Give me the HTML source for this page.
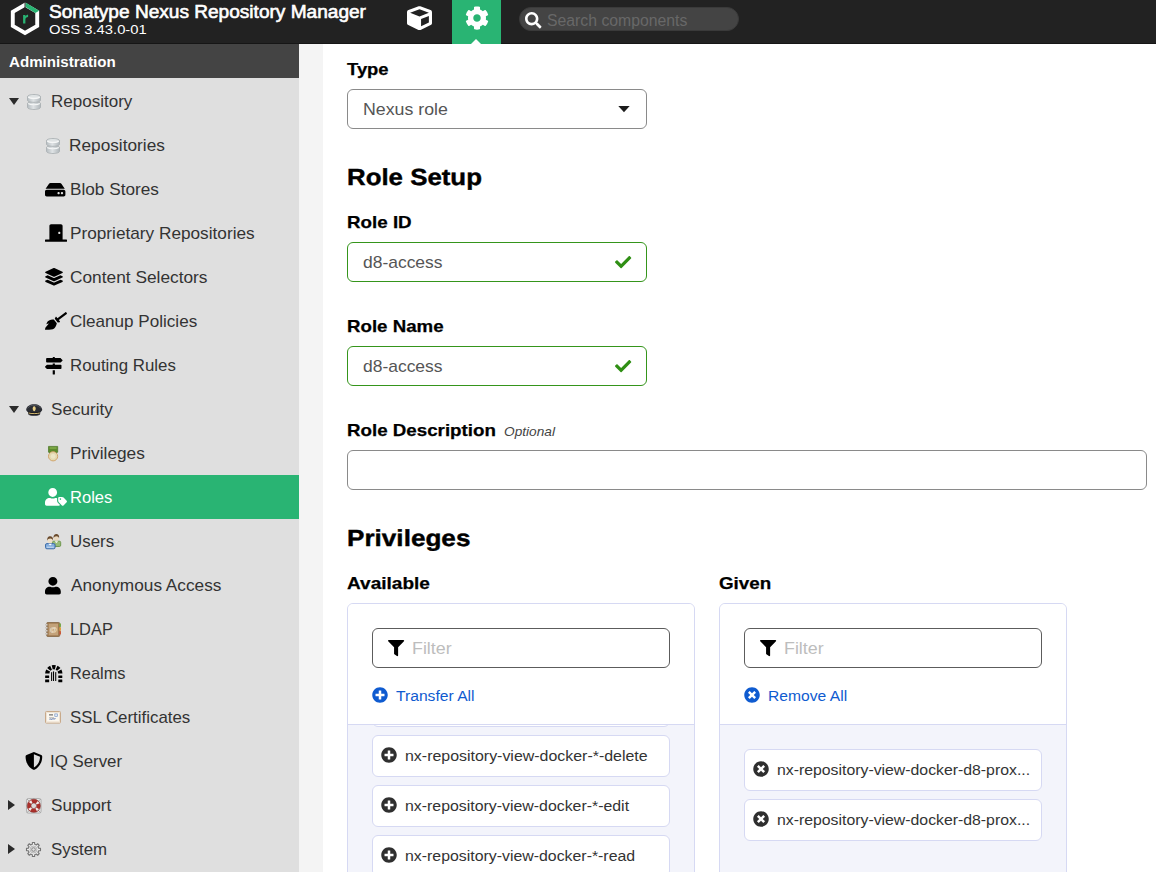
<!DOCTYPE html>
<html><head><meta charset="utf-8"><title>Nexus Repository Manager</title>
<style>
html,body{margin:0;padding:0;width:1156px;height:872px;overflow:hidden;background:#fff}
#app{position:absolute;left:0;top:0;width:1156px;height:872px;overflow:hidden;background:#fff;font-family:"Liberation Sans",sans-serif}
.t{position:absolute;white-space:nowrap;transform-origin:0 50%}
.abs{position:absolute}
.box{position:absolute;box-sizing:border-box;border-radius:6px;background:#fff}
svg{display:block;overflow:visible}
</style></head><body><div id="app">

<div class="abs" style="left:0;top:0;width:1156px;height:44px;background:#222"></div>
<div class="abs" style="left:0;top:43px;width:1156px;height:1px;background:#161616"></div>
<svg style="position:absolute;left:0px;top:0px;" width="48" height="44" viewBox="0 0 48 44"><polygon points="25.00,4.80 37.21,11.85 37.21,25.95 25.00,33.00 12.79,25.95 12.79,11.85" fill="none" stroke="#fff" stroke-width="3.9" stroke-linejoin="miter"/><polygon points="25.50,2.60 39.11,10.75 35.31,12.95 25.50,7.00" fill="#29b473"/><rect x="24.55" y="1.799999999999999" width="0.95" height="6.2" fill="#222"/><path fill="#29b473" d="M23.100 14.900h2.300v1.300c.6-.9 1.400-1.500 2.700-1.500v2.300c-1.600 0-2.700.8-2.700 2.600v4h-2.300z"/></svg>
<div class="t" style="left:48.81px;top:1px;font-size:18px;line-height:22px;font-weight:400;color:#fff;transform:scaleX(1.0595);-webkit-text-stroke:.6px #fff;">Sonatype Nexus Repository Manager</div>
<div class="t" style="left:48.91px;top:22px;font-size:12.5px;line-height:16px;font-weight:400;color:#fff;transform:scaleX(1.1816);">OSS 3.43.0-01</div>
<svg preserveAspectRatio="none" style="position:absolute;left:407px;top:5.8px;" width="25" height="24.4" viewBox="0 0 512 512"><path fill="#fff" d="M239.1 6.3l-208 78c-18.7 7-31.1 25-31.1 45v225.1c0 18.2 10.3 34.8 26.5 42.900l208 104c13.500 6.800 29.400 6.800 42.900 0l208-104c16.300-8.100 26.500-24.800 26.500-42.900V129.300c0-20-12.400-37.900-31.100-44.900l-208-78C262 2.200 250 2.200 239.100 6.300zM256 68.400l192 72v1.100l-192 78-192-78v-1.100l192-72zm32 356V275.500l160-65v133.900l-160 80z"/></svg>
<div class="abs" style="left:452px;top:0;width:49px;height:44px;background:#29b473"></div>
<svg style="position:absolute;left:464.5px;top:6px;" width="24" height="24" viewBox="0 0 512 512"><path fill="#fff" d="M487.4 315.7l-42.600-24.600c4.300-23.200 4.300-47 0-70.200l42.600-24.600c4.900-2.800 7.100-8.600 5.500-14-11.100-35.600-30-67.800-54.700-94.600-3.800-4.100-10-5.100-14.800-2.300L380.800 110c-17.900-15.400-38.500-27.300-60.800-35.100V25.800c0-5.600-3.900-10.500-9.400-11.700-36.700-8.200-74.300-7.800-109.200 0-5.500 1.200-9.400 6.100-9.400 11.700V75c-22.200 7.900-42.800 19.800-60.800 35.100L88.700 85.500c-4.900-2.800-11-1.900-14.800 2.300-24.700 26.700-43.600 58.900-54.700 94.600-1.700 5.400.6 11.200 5.500 14L67.300 221c-4.300 23.200-4.300 47 0 70.200l-42.600 24.600c-4.900 2.800-7.100 8.600-5.500 14 11.100 35.600 30 67.800 54.700 94.600 3.800 4.100 10 5.100 14.800 2.300l42.600-24.600c17.900 15.400 38.500 27.300 60.800 35.100v49.200c0 5.600 3.900 10.500 9.400 11.700 36.700 8.200 74.300 7.800 109.200 0 5.500-1.200 9.400-6.100 9.400-11.700v-49.200c22.200-7.900 42.800-19.800 60.800-35.100l42.600 24.600c4.900 2.800 11 1.900 14.800-2.300 24.700-26.700 43.600-58.900 54.700-94.600 1.500-5.500-.7-11.300-5.600-14.100zM256 336c-44.100 0-80-35.900-80-80s35.900-80 80-80 80 35.900 80 80-35.900 80-80 80z"/></svg>
<svg style="position:absolute;left:470px;top:38px;" width="12" height="6" viewBox="0 0 12 6"><path d="M1 6L6 0.900L11 6z" fill="#fff"/></svg>
<div class="abs" style="left:519px;top:7px;width:220px;height:24px;border-radius:12px;background:#444;box-sizing:border-box;border:1px solid #3a3a3a"></div>
<svg style="position:absolute;left:525px;top:12px;" width="16.5" height="16.5" viewBox="0 0 512 512"><path fill="#fff" d="M505 442.700L405.300 343c-4.500-4.500-10.600-7-17-7H372c27.600-35.300 44-79.700 44-128C416 93.100 322.900 0 208 0S0 93.100 0 208s93.100 208 208 208c48.300 0 92.700-16.400 128-44v16.300c0 6.400 2.500 12.500 7 17l99.700 99.700c9.400 9.400 24.600 9.400 33.900 0l28.300-28.300c9.400-9.400 9.400-24.600.1-34zM208 336c-70.700 0-128-57.200-128-128 0-70.700 57.200-128 128-128 70.700 0 128 57.200 128 128 0 70.700-57.200 128-128 128z"/></svg>
<div class="t" style="left:546.66px;top:11px;font-size:16px;line-height:19px;font-weight:400;color:#686868;transform:scaleX(0.9865);">Search components</div>
<div class="abs" style="left:0;top:44px;width:299px;height:828px;background:#dfdfdf"></div>
<div class="abs" style="left:0;top:44px;width:299px;height:34px;background:#444"></div>
<div class="t" style="left:9.20px;top:52px;font-size:15px;line-height:19px;font-weight:700;color:#fff;transform:scaleX(1.0077);">Administration</div>
<div class="abs" style="left:299px;top:44px;width:24px;height:828px;background:#f4f4f4"></div>
<svg style="position:absolute;left:9px;top:98.0px;" width="10" height="7" viewBox="0 0 10 7"><path d="M0 0h10L5 7z" fill="#2b2b2b"/></svg>
<div class="t" style="left:51.00px;top:79px;font-size:17px;line-height:45px;font-weight:400;color:#333;transform:scaleX(1.0006);">Repository</div>
<div class="t" style="left:69.18px;top:123px;font-size:17px;line-height:45px;font-weight:400;color:#333;transform:scaleX(1.0146);">Repositories</div>
<div class="t" style="left:69.58px;top:167px;font-size:17px;line-height:45px;font-weight:400;color:#333;transform:scaleX(1.0122);">Blob Stores</div>
<div class="t" style="left:69.58px;top:211px;font-size:17px;line-height:45px;font-weight:400;color:#333;transform:scaleX(1.0125);">Proprietary Repositories</div>
<div class="t" style="left:70.14px;top:255px;font-size:17px;line-height:45px;font-weight:400;color:#333;transform:scaleX(1.0176);">Content Selectors</div>
<div class="t" style="left:70.15px;top:299px;font-size:17px;line-height:45px;font-weight:400;color:#333;transform:scaleX(1.0044);">Cleanup Policies</div>
<div class="t" style="left:69.61px;top:343px;font-size:17px;line-height:45px;font-weight:400;color:#333;transform:scaleX(0.9909);">Routing Rules</div>
<svg style="position:absolute;left:9px;top:406.0px;" width="10" height="7" viewBox="0 0 10 7"><path d="M0 0h10L5 7z" fill="#2b2b2b"/></svg>
<div class="t" style="left:50.75px;top:387px;font-size:17px;line-height:45px;font-weight:400;color:#333;transform:scaleX(1.0050);">Security</div>
<div class="t" style="left:69.58px;top:431px;font-size:17px;line-height:45px;font-weight:400;color:#333;transform:scaleX(1.0154);">Privileges</div>
<div class="abs" style="left:0;top:475px;width:299px;height:44px;background:#29b473"></div>
<div class="t" style="left:69.64px;top:475px;font-size:17px;line-height:45px;font-weight:400;color:#fff;transform:scaleX(0.9745);">Roles</div>
<div class="t" style="left:69.76px;top:519px;font-size:17px;line-height:45px;font-weight:400;color:#333;transform:scaleX(0.9929);">Users</div>
<div class="t" style="left:70.70px;top:563px;font-size:17px;line-height:45px;font-weight:400;color:#333;transform:scaleX(1.0139);">Anonymous Access</div>
<div class="t" style="left:69.55px;top:607px;font-size:17px;line-height:45px;font-weight:400;color:#333;transform:scaleX(0.9643);">LDAP</div>
<div class="t" style="left:69.55px;top:651px;font-size:17px;line-height:45px;font-weight:400;color:#333;transform:scaleX(0.9640);">Realms</div>
<div class="t" style="left:70.16px;top:695px;font-size:17px;line-height:45px;font-weight:400;color:#333;transform:scaleX(0.9921);">SSL Certificates</div>
<div class="t" style="left:49.81px;top:739px;font-size:17px;line-height:45px;font-weight:400;color:#333;transform:scaleX(0.9901);">IQ Server</div>
<svg style="position:absolute;left:8px;top:800px;" width="7" height="10" viewBox="0 0 7 10"><path d="M0 0v10L7 5z" fill="#2b2b2b"/></svg>
<div class="t" style="left:50.84px;top:783px;font-size:17px;line-height:45px;font-weight:400;color:#333;transform:scaleX(1.0128);">Support</div>
<svg style="position:absolute;left:8px;top:844px;" width="7" height="10" viewBox="0 0 7 10"><path d="M0 0v10L7 5z" fill="#2b2b2b"/></svg>
<div class="t" style="left:50.86px;top:827px;font-size:17px;line-height:45px;font-weight:400;color:#333;transform:scaleX(0.9900);">System</div>
<svg style="position:absolute;left:27px;top:94px;" width="14" height="16" viewBox="0 0 14 16"><defs><linearGradient id="dbg2794" x1="0" x2="1"><stop offset="0" stop-color="#b6bdc1"/><stop offset=".45" stop-color="#dfe3e5"/><stop offset="1" stop-color="#b0b7bb"/></linearGradient></defs><path d="M.5 9.400c0-1 2.900-1.700 6.500-1.700s6.500.7 6.500 1.700v3.900c0 1.300-2.900 2.200-6.500 2.200S.5 14.600.5 13.300z" fill="url(#dbg2794)" stroke="#a7adb0" stroke-width=".8"/><path d="M1.200 9.500c1 .9 3.100 1.300 5.800 1.300s4.800-.4 5.800-1.300" fill="none" stroke="#f4f6f6" stroke-width="1.100"/><path d="M.5 2.600C.5 1.400 3.400.5 7 .5s6.500.9 6.500 2.100v3.700c0 1.200-2.900 2-6.500 2S.5 7.500.5 6.300z" fill="url(#dbg2794)" stroke="#a7adb0" stroke-width=".8"/><ellipse cx="7" cy="2.700" rx="5.700" ry="1.700" fill="#dfe3e4"/><path d="M1.200 3c1 1 3.100 1.400 5.800 1.400s4.800-.4 5.800-1.400" fill="none" stroke="#f6f7f7" stroke-width="1.100"/></svg>
<svg style="position:absolute;left:46px;top:138px;" width="14" height="16" viewBox="0 0 14 16"><defs><linearGradient id="dbg46138" x1="0" x2="1"><stop offset="0" stop-color="#b6bdc1"/><stop offset=".45" stop-color="#dfe3e5"/><stop offset="1" stop-color="#b0b7bb"/></linearGradient></defs><path d="M.5 9.400c0-1 2.900-1.700 6.500-1.700s6.500.7 6.500 1.700v3.900c0 1.300-2.900 2.200-6.500 2.200S.5 14.600.5 13.300z" fill="url(#dbg46138)" stroke="#a7adb0" stroke-width=".8"/><path d="M1.200 9.500c1 .9 3.100 1.300 5.800 1.300s4.800-.4 5.800-1.300" fill="none" stroke="#f4f6f6" stroke-width="1.100"/><path d="M.5 2.600C.5 1.400 3.400.5 7 .5s6.500.9 6.500 2.100v3.700c0 1.200-2.900 2-6.500 2S.5 7.500.5 6.300z" fill="url(#dbg46138)" stroke="#a7adb0" stroke-width=".8"/><ellipse cx="7" cy="2.700" rx="5.700" ry="1.700" fill="#dfe3e4"/><path d="M1.200 3c1 1 3.100 1.400 5.800 1.400s4.800-.4 5.800-1.400" fill="none" stroke="#f6f7f7" stroke-width="1.100"/></svg>
<svg style="position:absolute;left:45px;top:182.7px;" width="20.4" height="13.5" viewBox="0 64 576 384" preserveAspectRatio="none"><path fill="#000" d="M576 304v96c0 26.510-21.490 48-48 48H48c-26.510 0-48-21.490-48-48v-96c0-26.510 21.490-48 48-48h480c26.510 0 48 21.490 48 48zm-48-80a79.557 79.557 0 0 1 30.777 6.165L462.250 85.374A48.003 48.003 0 0 0 422.311 64H153.689a48 48 0 0 0-39.938 21.374L17.223 230.165A79.557 79.557 0 0 1 48 224h480zm-48 96c-17.673 0-32 14.327-32 32s14.327 32 32 32 32-14.327 32-32-14.327-32-32-32zm-96 0c-17.673 0-32 14.327-32 32s14.327 32 32 32 32-14.327 32-32-14.327-32-32-32z"/></svg>
<svg style="position:absolute;left:45px;top:224.3px;" width="22" height="17.9" viewBox="0 0 640 512"><path fill="#000" d="M624 448H512V50.800C512 22.780 490.470 0 464 0H175.990c-26.470 0-48 22.780-48 50.800V448H16c-8.840 0-16 7.160-16 16v32c0 8.840 7.160 16 16 16h608c8.840 0 16-7.160 16-16v-32c0-8.840-7.160-16-16-16zM415.990 288c-17.670 0-32-14.330-32-32s14.330-32 32-32 32 14.330 32 32c.010 17.670-14.320 32-32 32z"/></svg>
<svg style="position:absolute;left:45px;top:268.4px;" width="18" height="17.7" viewBox="0 0 512 512"><path fill="#000" d="M12.410 148.020l232.940 105.670c6.800 3.090 14.490 3.090 21.290 0l232.940-105.670c16.550-7.510 16.550-32.520 0-40.030L266.650 2.310a25.607 25.607 0 0 0-21.290 0L12.410 107.980c-16.550 7.510-16.550 32.530 0 40.040zm487.180 88.280l-58.090-26.330-161.640 73.270c-7.560 3.430-15.590 5.170-23.860 5.170s-16.290-1.740-23.860-5.170L70.510 209.970l-58.100 26.330c-16.550 7.500-16.550 32.500 0 40l232.940 105.590c6.800 3.080 14.490 3.080 21.290 0L499.590 276.300c16.550-7.500 16.550-32.500 0-40zm0 127.800l-57.870-26.230-161.860 73.370c-7.560 3.430-15.590 5.170-23.860 5.170s-16.290-1.740-23.860-5.170L70.290 337.870 12.410 364.100c-16.550 7.500-16.550 32.500 0 40l232.940 105.590c6.800 3.080 14.490 3.080 21.290 0L499.590 404.100c16.550-7.500 16.550-32.500 0-40z"/></svg>
<svg style="position:absolute;left:45px;top:312.4px;" width="22" height="17.8" viewBox="0 0 640 512"><path fill="#000" d="M256.470 216.770l86.730 109.180s-16.600 102.360-76.570 150.120C206.660 523.850 0 510.190 0 510.190s3.800-23.140 11-55.430l94.620-112.170c3.970-4.700-.87-11.620-6.650-9.500l-60.400 22.090c14.440-41.660 32.720-80.040 54.600-97.470 59.970-47.760 163.300-40.940 163.300-40.940zM636.530 31.030l-19.860-25c-5.490-6.900-15.520-8.050-22.410-2.560l-232.480 177.800-34.140-42.970c-5.090-6.410-15.140-5.210-18.590 2.210l-25.330 54.550 86.730 109.180 58.800-12.450c8-1.690 11.420-11.200 6.340-17.600l-34.090-42.920 232.480-177.800c6.890-5.480 8.040-15.530 2.550-22.440z"/></svg>
<svg style="position:absolute;left:45px;top:356.6px;" width="17.6" height="17.6" viewBox="0 0 512 512"><path fill="#000" d="M507.310 84.690L464 41.370c-6-6-14.140-9.370-22.630-9.370H288V16c0-8.840-7.160-16-16-16h-32c-8.840 0-16 7.160-16 16v16H56c-13.250 0-24 10.750-24 24v80c0 13.250 10.750 24 24 24h385.370c8.490 0 16.620-3.370 22.630-9.370l43.310-43.310c6.250-6.260 6.250-16.390 0-22.630zM224 496c0 8.840 7.160 16 16 16h32c8.840 0 16-7.160 16-16V384h-64v112zm232-272H288v-32h-64v32H70.630c-8.490 0-16.620 3.370-22.630 9.370L4.690 276.690c-6.250 6.250-6.250 16.380 0 22.630L48 342.630c6 6 14.140 9.370 22.630 9.370H456c13.250 0 24-10.750 24-24v-80c0-13.250-10.750-24-24-24z"/></svg>
<svg style="position:absolute;left:45px;top:488.4px;" width="22" height="17.8" viewBox="0 0 640 512"><path fill="#fff" d="M630.600 364.900l-90.300-90.200c-12-12-28.300-18.700-45.300-18.700h-79.300c-17.700 0-32 14.300-32 32v79.200c0 17 6.700 33.200 18.700 45.200l90.300 90.200c12.500 12.500 32.800 12.500 45.300 0l92.500-92.500c12.600-12.500 12.600-32.700.1-45.200zm-182.800-21c-13.300 0-24-10.700-24-24s10.700-24 24-24 24 10.700 24 24c0 13.200-10.700 24-24 24zm-223.800-88c70.700 0 128-57.300 128-128C352 57.300 294.700 0 224 0S96 57.300 96 128c0 70.600 57.300 127.900 128 127.900zm127.800 111.200V294c-12.200-3.600-24.900-6.200-38.200-6.200h-16.700c-22.200 10.200-46.900 16-72.900 16s-50.600-5.800-72.900-16h-16.700C60.200 287.900 0 348.100 0 422.300v41.600c0 26.500 21.500 48 48 48h352c15.500 0 29.100-7.500 37.900-18.900l-58-58c-18.100-18.100-28.100-42.200-28.100-67.900z"/></svg>
<svg preserveAspectRatio="none" style="position:absolute;left:45.1px;top:576.7px;" width="15.8" height="17.4" viewBox="0 0 448 512"><path fill="#000" d="M224 256c70.700 0 128-57.300 128-128S294.700 0 224 0 96 57.300 96 128s57.300 128 128 128zm89.600 32h-16.700c-22.200 10.200-46.900 16-72.900 16s-50.600-5.800-72.900-16h-16.700C60.200 288 0 348.200 0 422.400V464c0 26.500 21.500 48 48 48h352c26.500 0 48-21.500 48-48v-41.600c0-74.200-60.200-134.400-134.400-134.400z"/></svg>
<svg style="position:absolute;left:25px;top:752.2px;" width="17.8" height="17.8" viewBox="0 0 512 512"><path fill="#000" d="M466.500 83.700l-192-80a48.150 48.150 0 0 0-36.900 0l-192 80C27.700 91.100 16 108.600 16 128c0 198.500 114.500 335.700 221.500 380.300 11.800 4.900 25.100 4.900 36.900 0C360.100 472.600 496 349.300 496 128c0-19.400-11.700-36.900-29.500-44.300zM256.100 446.300l-.1-381 175.900 73.300c-3.300 151.400-82.100 261.100-175.800 307.700z"/></svg>
<svg style="position:absolute;left:25.8px;top:403.6px;" width="16.4" height="12" viewBox="0 0 16.400 12"><path d="M.2 5.400C.8 2.300 4 .3 8.200.3s7.400 2 8 5.100c.2 1-1 2.200-2 2.900-1.500 1-10.500 1-12 0-1-.7-2.200-1.900-2-2.900z" fill="#2b2d33"/><path d="M1.600 4.300C2.800 2.200 5.200 1.200 8.200 1.200s5.400 1 6.600 3.100" fill="none" stroke="#5c6068" stroke-width=".8"/><path d="M2 7.600c2 1.100 10.400 1.100 12.400 0l-.3 2.700c-1.700 1.700-10.100 1.700-11.800 0z" fill="#15161a"/><path d="M2.600 9c2.400.8 8.800.8 11.200 0" stroke="#e6c877" stroke-width=".9" fill="none"/><path d="M2.700 10.500c2 1.300 9 1.300 11 0" stroke="#3c3e45" stroke-width=".8" fill="none"/><path d="M8.200 2.300c1 0 1.500 1 1.500 2.300s-.6 2.600-1.500 2.600-1.500-1.300-1.500-2.600.5-2.300 1.500-2.300z" fill="#e9cf86"/></svg>
<svg style="position:absolute;left:48px;top:446px;" width="10.2" height="15.5" viewBox="0 0 10.200 15.500"><path d="M.5.400h9.200v5.800L5.100 8 .5 6.200z" fill="#5d8a2c" stroke="#4a7622" stroke-width=".7"/><rect x="1.600" y="1.300" width="7" height="1.400" fill="#86b04e"/><circle cx="5.100" cy="10.300" r="4.600" fill="#e4dbb4" stroke="#d0a46a" stroke-width="1"/><circle cx="5.100" cy="10.300" r="2.900" fill="#ece6c6" stroke="#dcd0a0" stroke-width=".5"/></svg>
<svg style="position:absolute;left:45px;top:534px;" width="16.2" height="15.2" viewBox="0 0 16.200 15.200"><rect x="7.300" y="7.200" width="8.400" height="5.300" rx="1.300" fill="#97bb78" stroke="#5d8a3a" stroke-width=".8"/><path d="M9.600 7.300l1.800 1.700 1.800-1.700z" fill="#fff"/><ellipse cx="11.300" cy="3.700" rx="2.500" ry="3" fill="#ead9c0"/><path d="M8.600 4.200C8.100 1.300 9.800.1 11.400.1s3.200 1.200 2.700 4.100c-.3-1.300-1.200-2-2.700-2s-2.500.7-2.800 2z" fill="#6a4a2c"/><rect x=".5" y="9.600" width="9.600" height="5.200" rx="1.400" fill="#85aedd" stroke="#3465a4" stroke-width=".9"/><path d="M3.200 9.700l2 1.900 2-1.900z" fill="#fff"/><rect x="1.800" y="12.700" width="7" height="1.100" fill="#c5daf0"/><ellipse cx="5.100" cy="6.100" rx="2.600" ry="3.100" fill="#efe0c8"/><path d="M2.300 6.700C1.800 3.600 3.500 2.300 5.200 2.300s3.300 1.300 2.800 4.400c-.3-1.400-1.300-2.100-2.800-2.100S2.600 5.300 2.300 6.700z" fill="#6a4a2c"/></svg>
<svg style="position:absolute;left:45px;top:622px;" width="16.3" height="15" viewBox="0 0 16.300 15"><rect x="1.700" y=".5" width="13" height="14" rx="1" fill="#a07a50" stroke="#7a5a36" stroke-width=".7"/><rect x="3.700" y="1.700" width="9.300" height="11.600" fill="#c3a27a"/><rect x="14.300" y="1.500" width="1.700" height="3.400" fill="#79a84a"/><rect x="14.300" y="5.300" width="1.700" height="3.400" fill="#e0a040"/><rect x="14.300" y="9.100" width="1.700" height="3.400" fill="#c95a3a"/><g fill="#e9e4dc" stroke="#8a8278" stroke-width=".4"><circle cx="1.700" cy="2.800" r="1"/><circle cx="1.700" cy="5.800" r="1"/><circle cx="1.700" cy="8.800" r="1"/><circle cx="1.700" cy="11.800" r="1"/></g><text x="8.400" y="10.300" font-family="Liberation Sans" font-size="7.500" font-weight="700" fill="#f4ead8" text-anchor="middle">@</text></svg>
<svg style="position:absolute;left:44.9px;top:664.8px;" width="17.6" height="17.4" viewBox="0 0 17.600 17.400"><g fill="#000"><path d="M0.15 8.45A8.65 8.65 0 0 1 1.23 4.41L5.04 6.52A4.3 4.3 0 0 0 4.50 8.52z"/><path d="M2.17 3.04A8.65 8.65 0 0 1 5.14 0.76L6.98 4.70A4.3 4.3 0 0 0 5.51 5.84z"/><path d="M6.71 0.21A8.65 8.65 0 0 1 10.89 0.21L9.84 4.43A4.3 4.3 0 0 0 7.76 4.43z"/><path d="M12.46 0.76A8.65 8.65 0 0 1 15.43 3.04L12.09 5.84A4.3 4.3 0 0 0 10.62 4.70z"/><path d="M16.37 4.41A8.65 8.65 0 0 1 17.45 8.45L13.10 8.52A4.3 4.3 0 0 0 12.56 6.52z"/><rect x="0.15" y="10.400" width="4" height="2.600" rx=".3"/><rect x="0.15" y="14.500" width="4" height="2.700" rx=".3"/><rect x="13.3" y="10.400" width="4" height="2.600" rx=".3"/><rect x="13.3" y="14.500" width="4" height="2.700" rx=".3"/><rect x="6.1" y="7.0" width="1.050" height="9.100000000000001" rx=".4"/><rect x="8.0" y="6.3" width="1.050" height="9.8" rx=".4"/><rect x="10.2" y="7.0" width="1.050" height="9.100000000000001" rx=".4"/></g></svg>
<svg style="position:absolute;left:45.3px;top:711px;" width="16" height="12.6" viewBox="0 0 16 12.600"><rect x=".5" y=".5" width="15" height="11.600" rx=".8" fill="#fbf7ef" stroke="#c8a98a" stroke-width="1"/><rect x="1.700" y="1.700" width="12.600" height="9.200" fill="none" stroke="#e6d6c2" stroke-width=".6"/><rect x="4" y="3.400" width="4" height="1" fill="#555"/><rect x="9.800" y="2.900" width="2.800" height="2.600" fill="#dfe8f5" stroke="#6f8fc0" stroke-width=".6"/><path d="M4.500 8.300c1-.9 1.600.6 2.600-.2s1.500.4 3.400-.5" stroke="#3f62a8" stroke-width=".9" fill="none"/><rect x="4" y="6.500" width="5" height=".7" fill="#999"/></svg>
<svg style="position:absolute;left:26px;top:798px;" width="15.6" height="15.6" viewBox="0 0 15.600 15.600"><rect x=".5" y=".5" width="14.600" height="14.600" rx="1.800" fill="#e4e4e4" stroke="#9c9c9c" stroke-width=".7"/><path d="M1.200 1.200l3 3M14.400 1.200l-3 3M1.200 14.400l3-3M14.400 14.400l-3-3" stroke="#8a8a8a" stroke-width=".7"/><circle cx="7.800" cy="7.800" r="4.700" fill="none" stroke="#ab302b" stroke-width="3.700"/><circle cx="7.800" cy="7.800" r="4.700" fill="none" stroke="#f1e9e8" stroke-width="3.300" stroke-dasharray="2.100 5.283" stroke-dashoffset="-2.640"/><circle cx="7.800" cy="7.800" r="6.600" fill="none" stroke="#7d2420" stroke-width=".6"/><circle cx="7.800" cy="7.800" r="2.800" fill="#dcdcdc" stroke="#7d2420" stroke-width=".6"/></svg>
<svg style="position:absolute;left:26px;top:842px;" width="15" height="15" viewBox="0 0 15 15"><path d="M6.30 2.34L6.39 0.49L8.61 0.49L8.70 2.34L10.30 3.00L11.67 1.76L13.24 3.33L12.00 4.70L12.66 6.30L14.51 6.39L14.51 8.61L12.66 8.70L12.00 10.30L13.24 11.67L11.67 13.24L10.30 12.00L8.70 12.66L8.61 14.51L6.39 14.51L6.30 12.66L4.70 12.00L3.33 13.24L1.76 11.67L3.00 10.30L2.34 8.70L0.49 8.61L0.49 6.39L2.34 6.30L3.00 4.70L1.76 3.33L3.33 1.76L4.70 3.00z" fill="#ececec" stroke="#747474" stroke-width="1.100" stroke-linejoin="round"/><circle cx="7.500" cy="7.500" r="3.5" fill="#d9d9d9" stroke="#a2a2a2" stroke-width=".6"/><circle cx="7.500" cy="7.500" r="1.7999999999999998" fill="#dfdfdf" stroke="#7f7f7f" stroke-width=".9"/></svg>
<div class="t" style="left:347.03px;top:59px;font-size:17px;line-height:21px;font-weight:700;color:#000;transform:scaleX(1.0827);-webkit-text-stroke:.25px #000;">Type</div>
<div class="box" style="left:347px;top:89px;width:300px;height:40px;border:1px solid #8a8a8a"></div>
<div class="t" style="left:362.63px;top:99px;font-size:17px;line-height:21px;font-weight:400;color:#555;transform:scaleX(1.0443);">Nexus role</div>
<svg style="position:absolute;left:618px;top:106px;" width="12" height="6.2" viewBox="0 0 12 6.200"><path d="M.3 0h11.400L6 6.200z" fill="#1c1c1c"/></svg>
<div class="t" style="left:346.93px;top:163px;font-size:23.2px;line-height:28px;font-weight:700;color:#000;transform:scaleX(1.1141) skewX(0.05deg);-webkit-text-stroke:.4px #000;">Role Setup</div>
<div class="t" style="left:347.32px;top:212px;font-size:17px;line-height:21px;font-weight:700;color:#000;transform:scaleX(1.1044);-webkit-text-stroke:.25px #000;">Role ID</div>
<div class="box" style="left:347px;top:242px;width:300px;height:40px;border:1px solid #35951b"></div>
<div class="t" style="left:363.13px;top:252px;font-size:17px;line-height:21px;font-weight:400;color:#555;transform:scaleX(1.0263);">d8-access</div>
<svg style="position:absolute;left:615px;top:254px;" width="16.3" height="16.3" viewBox="0 0 512 512"><path fill="#2f8f14" d="M173.898 439.404l-166.400-166.400c-9.997-9.997-9.997-26.206 0-36.204l36.203-36.204c9.997-9.998 26.207-9.998 36.204 0L192 312.690 432.095 72.596c9.997-9.997 26.207-9.997 36.204 0l36.203 36.204c9.997 9.997 9.997 26.206 0 36.204l-294.400 294.401c-9.998 9.997-26.207 9.997-36.204-.001z"/></svg>
<div class="t" style="left:347.32px;top:316px;font-size:17px;line-height:21px;font-weight:700;color:#000;transform:scaleX(1.1000);-webkit-text-stroke:.25px #000;">Role Name</div>
<div class="box" style="left:347px;top:346px;width:300px;height:40px;border:1px solid #35951b"></div>
<div class="t" style="left:363.13px;top:356px;font-size:17px;line-height:21px;font-weight:400;color:#555;transform:scaleX(1.0263);">d8-access</div>
<svg style="position:absolute;left:615px;top:358px;" width="16.3" height="16.3" viewBox="0 0 512 512"><path fill="#2f8f14" d="M173.898 439.404l-166.400-166.400c-9.997-9.997-9.997-26.206 0-36.204l36.203-36.204c9.997-9.998 26.207-9.998 36.204 0L192 312.690 432.095 72.596c9.997-9.997 26.207-9.997 36.204 0l36.203 36.204c9.997 9.997 9.997 26.206 0 36.204l-294.400 294.401c-9.998 9.997-26.207 9.997-36.204-.001z"/></svg>
<div class="t" style="left:347.32px;top:420px;font-size:17px;line-height:21px;font-weight:700;color:#000;transform:scaleX(1.1021);-webkit-text-stroke:.25px #000;">Role Description</div>
<div class="t" style="left:503.89px;top:424px;font-size:12.7px;line-height:16px;font-weight:400;color:#444;font-style:italic;transform:scaleX(1.0781);">Optional</div>
<div class="box" style="left:347px;top:450px;width:800px;height:40px;border:1px solid #8a8a8a"></div>
<div class="t" style="left:346.81px;top:524px;font-size:23.2px;line-height:28px;font-weight:700;color:#000;transform:scaleX(1.1263) skewX(0.05deg);-webkit-text-stroke:.4px #000;">Privileges</div>
<div class="t" style="left:347.04px;top:573px;font-size:17px;line-height:21px;font-weight:700;color:#000;transform:scaleX(1.1205);-webkit-text-stroke:.25px #000;">Available</div>
<div class="t" style="left:719.07px;top:573px;font-size:17px;line-height:21px;font-weight:700;color:#000;transform:scaleX(1.1055);-webkit-text-stroke:.25px #000;">Given</div>
<div class="abs" style="left:347px;top:603px;width:348px;height:290px;box-sizing:border-box;border:1px solid #d6d9f3;border-radius:6px;background:#f3f4fb;overflow:hidden"><div class="abs" style="left:0;top:0;width:346px;height:120px;background:#fff;border-bottom:1px solid #d6d9f3"></div></div><div class="box" style="left:372px;top:628px;width:298px;height:40px;border:1px solid #5c5c5c"></div><svg style="position:absolute;left:388px;top:640px;" width="16.2" height="16.2" viewBox="0 0 512 512"><path fill="#000" d="M487.976 0H24.028C2.710 0-8.047 25.866 7.058 40.971L192 225.941V432c0 7.831 3.821 15.170 10.237 19.662l80 55.980C298.020 518.690 320 507.493 320 487.980V225.941l184.947-184.970C520.021 25.896 509.338 0 487.976 0z"/></svg><div class="t" style="left:411.82px;top:638px;font-size:17px;line-height:21px;font-weight:400;color:#bdbdbd;transform:scaleX(1.0500);">Filter</div><svg style="position:absolute;left:372px;top:687px;" width="16" height="16" viewBox="0 0 512 512"><path fill="#0f5bd0" d="M256 8C119 8 8 119 8 256s111 248 248 248 248-111 248-248S393 8 256 8zm144 276c0 6.600-5.400 12-12 12h-92v92c0 6.600-5.400 12-12 12h-56c-6.600 0-12-5.400-12-12v-92h-92c-6.600 0-12-5.400-12-12v-56c0-6.600 5.400-12 12-12h92v-92c0-6.600 5.400-12 12-12h56c6.600 0 12 5.400 12 12v92h92c6.600 0 12 5.400 12 12v56z"/></svg><div class="t" style="left:396.45px;top:686px;font-size:15.5px;line-height:19px;font-weight:400;color:#0f5bd0;transform:scaleX(1.0092);">Transfer All</div>
<div class="abs" style="left:348px;top:725px;width:346px;height:4px;overflow:hidden"><div class="box" style="left:24px;top:-40px;width:298px;height:42px;border:1px solid #d6d9f3"></div></div>
<div class="box" style="left:372px;top:735px;width:298px;height:42px;border:1px solid #d6d9f3"></div><svg style="position:absolute;left:381px;top:747px;" width="16" height="16" viewBox="0 0 512 512"><path fill="#2f2f2f" d="M256 8C119 8 8 119 8 256s111 248 248 248 248-111 248-248S393 8 256 8zm144 276c0 6.600-5.400 12-12 12h-92v92c0 6.600-5.400 12-12 12h-56c-6.600 0-12-5.400-12-12v-92h-92c-6.600 0-12-5.400-12-12v-56c0-6.600 5.400-12 12-12h92v-92c0-6.600 5.400-12 12-12h56c6.600 0 12 5.400 12 12v92h92c6.600 0 12 5.400 12 12v56z"/></svg><div class="t" style="left:404.87px;top:746px;font-size:15.5px;line-height:19px;font-weight:400;color:#333;transform:scaleX(1.0280);">nx-repository-view-docker-*-delete</div>
<div class="box" style="left:372px;top:785px;width:298px;height:42px;border:1px solid #d6d9f3"></div><svg style="position:absolute;left:381px;top:797px;" width="16" height="16" viewBox="0 0 512 512"><path fill="#2f2f2f" d="M256 8C119 8 8 119 8 256s111 248 248 248 248-111 248-248S393 8 256 8zm144 276c0 6.600-5.400 12-12 12h-92v92c0 6.600-5.400 12-12 12h-56c-6.600 0-12-5.400-12-12v-92h-92c-6.600 0-12-5.400-12-12v-56c0-6.600 5.400-12 12-12h92v-92c0-6.600 5.400-12 12-12h56c6.600 0 12 5.400 12 12v92h92c6.600 0 12 5.400 12 12v56z"/></svg><div class="t" style="left:404.88px;top:796px;font-size:15.5px;line-height:19px;font-weight:400;color:#333;transform:scaleX(1.0241);">nx-repository-view-docker-*-edit</div>
<div class="box" style="left:372px;top:835px;width:298px;height:42px;border:1px solid #d6d9f3"></div><svg style="position:absolute;left:381px;top:847px;" width="16" height="16" viewBox="0 0 512 512"><path fill="#2f2f2f" d="M256 8C119 8 8 119 8 256s111 248 248 248 248-111 248-248S393 8 256 8zm144 276c0 6.600-5.400 12-12 12h-92v92c0 6.600-5.400 12-12 12h-56c-6.600 0-12-5.400-12-12v-92h-92c-6.600 0-12-5.400-12-12v-56c0-6.600 5.400-12 12-12h92v-92c0-6.600 5.400-12 12-12h56c6.600 0 12 5.400 12 12v92h92c6.600 0 12 5.400 12 12v56z"/></svg><div class="t" style="left:404.88px;top:846px;font-size:15.5px;line-height:19px;font-weight:400;color:#333;transform:scaleX(1.0236);">nx-repository-view-docker-*-read</div>
<div class="abs" style="left:719px;top:603px;width:348px;height:290px;box-sizing:border-box;border:1px solid #d6d9f3;border-radius:6px;background:#f3f4fb;overflow:hidden"><div class="abs" style="left:0;top:0;width:346px;height:120px;background:#fff;border-bottom:1px solid #d6d9f3"></div></div><div class="box" style="left:744px;top:628px;width:298px;height:40px;border:1px solid #5c5c5c"></div><svg style="position:absolute;left:760px;top:640px;" width="16.2" height="16.2" viewBox="0 0 512 512"><path fill="#000" d="M487.976 0H24.028C2.710 0-8.047 25.866 7.058 40.971L192 225.941V432c0 7.831 3.821 15.170 10.237 19.662l80 55.980C298.020 518.690 320 507.493 320 487.980V225.941l184.947-184.970C520.021 25.896 509.338 0 487.976 0z"/></svg><div class="t" style="left:783.82px;top:638px;font-size:17px;line-height:21px;font-weight:400;color:#bdbdbd;transform:scaleX(1.0500);">Filter</div><svg style="position:absolute;left:744px;top:687px;" width="16" height="16" viewBox="0 0 512 512"><path fill="#0f5bd0" d="M256 8C119 8 8 119 8 256s111 248 248 248 248-111 248-248S393 8 256 8zm121.600 313.100c4.700 4.700 4.700 12.300 0 17L338 377.600c-4.700 4.700-12.300 4.700-17 0L256 312l-65.100 65.600c-4.700 4.700-12.300 4.700-17 0L134.400 338c-4.700-4.700-4.700-12.300 0-17l65.600-65-65.600-65.100c-4.700-4.700-4.700-12.300 0-17l39.600-39.600c4.700-4.700 12.300-4.700 17 0l65 65.700 65.100-65.600c4.700-4.700 12.300-4.700 17 0l39.600 39.600c4.700 4.700 4.700 12.300 0 17L312 256l65.600 65.100z"/></svg><div class="t" style="left:768.04px;top:686px;font-size:15.5px;line-height:19px;font-weight:400;color:#0f5bd0;transform:scaleX(1.0092);">Remove All</div>
<div class="box" style="left:744px;top:749px;width:298px;height:42px;border:1px solid #d6d9f3"></div><svg style="position:absolute;left:753px;top:761px;" width="16" height="16" viewBox="0 0 512 512"><path fill="#2f2f2f" d="M256 8C119 8 8 119 8 256s111 248 248 248 248-111 248-248S393 8 256 8zm121.600 313.100c4.700 4.700 4.700 12.300 0 17L338 377.600c-4.700 4.700-12.300 4.700-17 0L256 312l-65.100 65.600c-4.700 4.700-12.300 4.700-17 0L134.400 338c-4.700-4.700-4.700-12.300 0-17l65.600-65-65.600-65.100c-4.700-4.700-4.700-12.300 0-17l39.600-39.600c4.700-4.700 12.300-4.700 17 0l65 65.700 65.100-65.600c4.700-4.700 12.300-4.700 17 0l39.600 39.600c4.700 4.700 4.700 12.300 0 17L312 256l65.600 65.100z"/></svg><div class="t" style="left:776.88px;top:760px;font-size:15.5px;line-height:19px;font-weight:400;color:#333;transform:scaleX(1.0201);">nx-repository-view-docker-d8-prox...</div>
<div class="box" style="left:744px;top:799px;width:298px;height:42px;border:1px solid #d6d9f3"></div><svg style="position:absolute;left:753px;top:811px;" width="16" height="16" viewBox="0 0 512 512"><path fill="#2f2f2f" d="M256 8C119 8 8 119 8 256s111 248 248 248 248-111 248-248S393 8 256 8zm121.600 313.100c4.700 4.700 4.700 12.300 0 17L338 377.600c-4.700 4.700-12.300 4.700-17 0L256 312l-65.100 65.600c-4.700 4.700-12.300 4.700-17 0L134.400 338c-4.700-4.700-4.700-12.300 0-17l65.600-65-65.600-65.100c-4.700-4.700-4.700-12.300 0-17l39.600-39.600c4.700-4.700 12.300-4.700 17 0l65 65.700 65.100-65.600c4.700-4.700 12.300-4.700 17 0l39.600 39.600c4.700 4.700 4.700 12.300 0 17L312 256l65.600 65.100z"/></svg><div class="t" style="left:776.88px;top:810px;font-size:15.5px;line-height:19px;font-weight:400;color:#333;transform:scaleX(1.0201);">nx-repository-view-docker-d8-prox...</div>
</div></body></html>
